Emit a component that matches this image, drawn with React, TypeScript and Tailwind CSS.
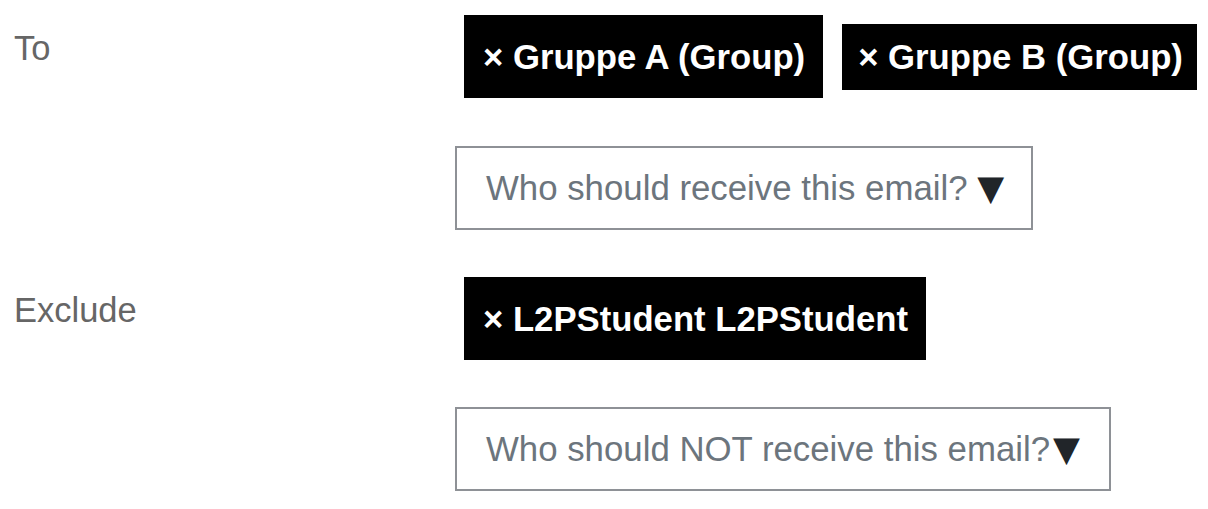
import React from 'react';

interface Recipient {
  label: string;
  wide?: boolean;
}

const toRecipients: Recipient[] = [
  { label: 'Gruppe A (Group)', wide: true },
  { label: 'Gruppe B (Group)' },
];

const excludeRecipients: Recipient[] = [{ label: 'L2PStudent L2PStudent', wide: true }];

function Chip({ label, wide }: Recipient) {
  return (
    <span
      className={`inline-flex items-center whitespace-nowrap bg-black text-white font-bold text-[34.7px] leading-[40px] ${
        wide ? 'pl-[19px] pr-[18px] py-[21.5px]' : 'pl-[16px] pr-[14px] py-[13px]'
      }`}
    >
      × {label}
    </span>
  );
}

function Picker({ placeholder, width, spaced }: { placeholder: string; width: string; spaced?: boolean }) {
  return (
    <div
      className={`${width} h-[84px] border-2 border-[#8e9196] flex items-center whitespace-pre pl-[29px] text-[34.8px] leading-[40px] text-[#6c757d]`}
    >
      <span>{spaced ? placeholder + ' ' : placeholder}</span>
      <span
        className={`${spaced ? 'ml-0' : 'ml-[3px]'} text-[#212529] text-[35px] font-['DejaVu_Sans',sans-serif]`}
      >
        ▼
      </span>
    </div>
  );
}

export default function App() {
  return (
    <div className="bg-white w-[1208px] h-[509px] pl-[14px] pt-[15px] font-['Liberation_Sans',Arial,sans-serif]">
      <div className="flex">
        <div className="w-[441px] pt-[13px] text-[34.5px] leading-[40px] text-[#666666]">To</div>
        <div className="flex flex-col">
          <div className="flex items-center gap-[19px] pl-[9px]">
            {toRecipients.map((r) => (
              <Chip key={r.label} {...r} />
            ))}
          </div>
          <div className="mt-[48px]">
            <Picker placeholder="Who should receive this email?" width="w-[578px]" spaced />
          </div>
        </div>
      </div>
      <div className="flex mt-[47px]">
        <div className="w-[441px] pt-[13px] text-[34.5px] leading-[40px] text-[#666666]">Exclude</div>
        <div className="flex flex-col">
          <div className="flex items-center gap-[19px] pl-[9px]">
            {excludeRecipients.map((r) => (
              <Chip key={r.label} {...r} />
            ))}
          </div>
          <div className="mt-[47px]">
            <Picker placeholder="Who should NOT receive this email?" width="w-[656px]" />
          </div>
        </div>
      </div>
    </div>
  );
}
